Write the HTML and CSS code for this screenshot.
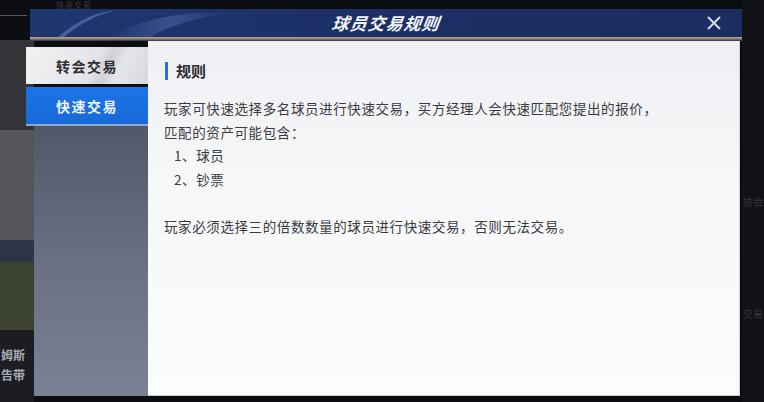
FILE: index.html
```html
<!DOCTYPE html>
<html lang="zh">
<head>
<meta charset="utf-8">
<link rel="stylesheet" href="styles.css">
</head>
<body>
<div class="scene">
  <div class="scene-left">
    <div class="bl b-top"><span class="bl-line"></span></div>
    <div class="bl b-dark"></div>
    <div class="bl b-grey"></div>
    <div class="bl b-navy"></div>
    <div class="bl b-olive"></div>
    <div class="bl b-text"><span>姆斯</span><span>告带</span></div>
  </div>
  <div class="scene-mid"><span class="ghost">快速交易</span></div>
  <div class="scene-right">
    <span class="rt rt1">协会</span>
    <span class="rt rt2">交易</span>
  </div>
</div>

<div class="modal">
  <div class="header">
    <svg class="swoosh" width="240" height="28" viewBox="0 0 240 28">
      <defs>
        <linearGradient id="g1" x1="0" y1="0" x2="1" y2="0">
          <stop offset="0" stop-color="#4a66a6" stop-opacity="0"/>
          <stop offset="0.5" stop-color="#4a66a6" stop-opacity="0.6"/>
          <stop offset="1" stop-color="#4a66a6" stop-opacity="0"/>
        </linearGradient>
      </defs>
      <path d="M28 28 C45 14 60 5 80 2 L84 2 C66 6 50 15 34 28 Z" fill="#5a76b4" opacity="0.65"/>
      <path d="M80 28 C110 10 150 2 200 4 C170 8 140 16 120 28 Z" fill="url(#g1)"/>
    </svg>
    <h1 class="title">球员交易规则</h1>
    <svg class="close" width="14" height="14" viewBox="0 0 14 14">
      <path d="M1.5 1.5 L12.5 12.5 M12.5 1.5 L1.5 12.5" stroke="#d5daea" stroke-width="2" stroke-linecap="round"/>
    </svg>
  </div>
  <div class="trim"></div>
  <div class="body">
    <div class="sidebar">
      <div class="tab tab-idle">转会交易</div>
      <div class="tab tab-active">快速交易</div>
      <div class="side-fill"></div>
    </div>
    <div class="content">
      <h2 class="heading">规则</h2>
      <p class="para">玩家可快速选择多名球员进行快速交易，买方经理人会快速匹配您提出的报价，<br>匹配的资产可能包含：</p>
      <p class="item">1、球员</p>
      <p class="item">2、钞票</p>
      <p class="para gap">玩家必须选择三的倍数数量的球员进行快速交易，否则无法交易。</p>
    </div>
  </div>
</div>
</body>
</html>
```

FILE: styles.css
```css
* { box-sizing: border-box; margin: 0; padding: 0; }
html, body { width: 764px; height: 402px; overflow: hidden; }
body {
  background: #0c0d11;
  font-family: "Noto Sans CJK SC", "Noto Sans", sans-serif;
  position: relative;
}

.scene { display: flex; width: 764px; height: 402px; }
.scene-left { width: 34px; display: flex; flex-direction: column; }
.bl { width: 100%; }
.b-top { height: 40px; background: #0d0e12; padding-top: 15px; }
.bl-line { display: block; width: 27px; height: 1px; background: #5a5b60; }
.b-dark { height: 90px; background: #333438; }
.b-grey { height: 110px; background: #55565a; }
.b-navy { height: 22px; background: #2b3546; }
.b-olive { height: 68px; background: #3b4231; }
.b-text {
  height: 72px; background: #1b1d22;
  display: flex; flex-direction: column; gap: 6px; padding-top: 18px;
  color: #a9abb2; font-size: 12px; line-height: 14px; font-weight: 700;
  white-space: nowrap;
}
.b-text span { margin-left: 1px; }
.scene-mid { flex: 1; background: #0c0d11; }
.ghost {
  display: block; margin: 0 0 0 22px;
  color: #3a3b41; font-size: 8px; line-height: 9px; letter-spacing: 1px;
}
.scene-right {
  width: 22px; background: #101216;
  display: flex; flex-direction: column;
}
.rt { color: #353840; font-size: 10px; line-height: 12px; white-space: nowrap; margin-left: 1px; }
.rt1 { margin-top: 196px; }
.rt2 { margin-top: 100px; }

/* modal overlays the scene */
.modal {
  position: absolute; left: 26px; top: 9px;
  width: 716px; height: 387px;
  display: flex; flex-direction: column;
}
.header {
  margin-left: 4px; height: 28px;
  background: linear-gradient(90deg, #20366f 0%, #1c2f66 50%, #1a2c60 100%);
  display: flex; align-items: center; justify-content: center;
  position: relative; overflow: hidden;
}
.swoosh { position: absolute; left: 0; top: 0; }
.title {
  color: #f2f4fa; font-size: 17px; font-weight: 700; font-style: italic;
  letter-spacing: 1px; line-height: 28px;
  transform: skewX(-8deg);
  position: relative;
}
.close { position: absolute; right: 21px; top: 7px; }
.trim {
  margin-left: 4px; height: 4px;
  background: linear-gradient(180deg, #b6a58e 0%, #8d8170 50%, #2b2c30 100%);
}
.body { flex: 1; display: flex; }
.sidebar { width: 122px; display: flex; flex-direction: column; padding-top: 6px; }
.tab {
  display: flex; align-items: center; justify-content: center;
  font-size: 14px; font-weight: 700; letter-spacing: 1.5px;
}
.tab-idle {
  height: 37px;
  background: linear-gradient(115deg, #f2f2f4 0%, #e4e4e8 55%, #cfd0d4 65%, #e6e6ea 75%, #d6d7db 100%);
  color: #2c2d31;
}
.tab-active {
  margin-top: 3px; height: 39px;
  background: linear-gradient(180deg, #1c74e6 0%, #176ad9 100%);
  color: #eef4ff;
  border-bottom: 2px solid #8fa9cf;
}
.side-fill {
  flex: 1; margin-left: 8px;
  background: linear-gradient(180deg, #505869 0%, #697084 50%, #7b8195 100%);
}
.content {
  width: 592px;
  background: linear-gradient(180deg, #eef0f3 0%, #f6f7f9 40%, #fbfcfe 100%);
  padding: 21px 0 0 16px;
  color: #3a3b40;
  border-right: 1px solid #cfd1d6;
  border-bottom: 1px solid #c8cad0;
}
.heading {
  font-size: 15px; font-weight: 700; line-height: 20px;
  color: #2a2b2f; padding-left: 8px; border-left: 3px solid #2b6fd8;
  margin-left: 1px; height: 18px; display: flex; align-items: center;
}
.para { font-size: 13.5px; line-height: 23.5px; letter-spacing: 0.6px; margin-top: 17px; }
.item { font-size: 13.5px; line-height: 23.5px; letter-spacing: 0.6px; padding-left: 10px; }
.para.gap { margin-top: 23.5px; }
```
